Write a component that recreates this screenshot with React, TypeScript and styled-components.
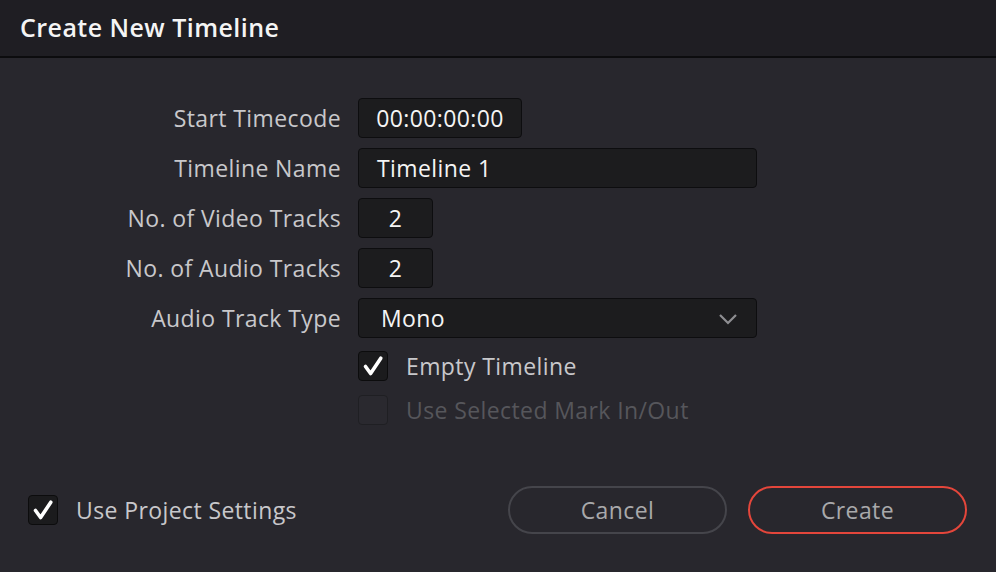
import React from "react";
import styled, { createGlobalStyle } from "styled-components";

const Global = createGlobalStyle`
  html, body { margin: 0; padding: 0; background: #28272d; }
  body { font-family: "Open Sans", "Noto Sans", sans-serif; }
  * { box-sizing: border-box; }
`;

const Dialog = styled.div`
  width: 996px;
  height: 572px;
  display: flex;
  flex-direction: column;
  background: #28272d;
  overflow: hidden;
`;

const Header = styled.div`
  height: 58px;
  flex: none;
  display: flex;
  align-items: center;
  padding: 0 0 3px 20px;
  background: #1f1e23;
  border-bottom: 2px solid #0c0c0e;
  color: #f4f4f4;
  font-size: 25px;
  font-weight: 600;
  letter-spacing: 0.45px;
`;

const Form = styled.div`
  display: grid;
  grid-template-columns: 341px auto;
  grid-auto-rows: 40px;
  column-gap: 17px;
  row-gap: 10px;
  padding-top: 40px;
`;

const Label = styled.div`
  display: flex;
  align-items: center;
  justify-content: flex-end;
  color: #c8c8cb;
  font-size: 23px;
  letter-spacing: 0.4px;
  padding-bottom: 1px;
`;

const Field = styled.div<{ $w: number; $align?: "center" | "left"; $pad?: number }>`
  width: ${(p) => p.$w}px;
  height: 40px;
  display: flex;
  align-items: center;
  justify-content: ${(p) => (p.$align === "center" ? "center" : "space-between")};
  padding: 0 ${(p) => p.$pad ?? 0}px 1px ${(p) => p.$pad ?? 0}px;
  background: #1c1c1e;
  border: 1px solid #0d0d0f;
  border-radius: 4px;
  color: #f4f4f4;
  font-size: 23px;
  letter-spacing: 0.4px;
`;

const Chevron = styled.svg`
  width: 20px;
  height: 12px;
  margin-right: -4px;
  margin-top: 2px;
`;

const CheckList = styled.div`
  display: flex;
  flex-direction: column;
  gap: 14px;
  padding: 13px 0 0 358px;
`;

const CheckRow = styled.div<{ $disabled?: boolean }>`
  display: flex;
  align-items: center;
  gap: 18px;
  height: 30px;
  line-height: 30px;
  font-size: 23px;
  letter-spacing: 0.4px;
  color: ${(p) => (p.$disabled ? "#56565b" : "#c8c8cb")};
`;

const Box = styled.div<{ $disabled?: boolean }>`
  width: 30px;
  height: 30px;
  flex: none;
  display: flex;
  align-items: center;
  justify-content: center;
  border-radius: 4px;
  background: ${(p) => (p.$disabled ? "#2a292f" : "#1b1b1d")};
  border: 1px solid ${(p) => (p.$disabled ? "#1f1f23" : "#0c0c0d")};
`;

const Footer = styled.div`
  margin-top: auto;
  display: flex;
  align-items: center;
  padding: 0 29px 38px 28px;
`;

const Spacer = styled.div`
  flex: 1;
`;

const Button = styled.button<{ $primary?: boolean }>`
  width: 219px;
  height: 48px;
  border-radius: 24px;
  background: transparent;
  border: 2px solid ${(p) => (p.$primary ? "#e4463b" : "#45454b")};
  color: #a9a9ab;
  font-family: "Open Sans", "Noto Sans", sans-serif;
  font-size: 23px;
  letter-spacing: 0.4px;
  padding: 0 0 1px;
  & + & {
    margin-left: 21px;
  }
`;

const Check = () => (
  <svg width="22" height="22" viewBox="0 0 22 22">
    <path
      d="M3.5 11.5 L8.6 18.5 L18.8 3.2"
      fill="none"
      stroke="#ffffff"
      strokeWidth="3.6"
      strokeLinecap="round"
      strokeLinejoin="round"
    />
  </svg>
);

function CheckBox({ checked, disabled }: { checked?: boolean; disabled?: boolean }) {
  return <Box $disabled={disabled}>{checked && <Check />}</Box>;
}

export default function App() {
  return (
    <>
      <Global />
      <Dialog>
        <Header>Create New Timeline</Header>
        <Form>
          <Label>Start Timecode</Label>
          <Field $w={164} $align="center">00:00:00:00</Field>
          <Label>Timeline Name</Label>
          <Field $w={399} $pad={18}>Timeline 1</Field>
          <Label>No. of Video Tracks</Label>
          <Field $w={75} $align="center">2</Field>
          <Label>No. of Audio Tracks</Label>
          <Field $w={75} $align="center">2</Field>
          <Label>Audio Track Type</Label>
          <Field $w={399} $pad={22}>
            Mono
            <Chevron viewBox="0 0 20 12">
              <path d="M2 2 L10 10 L18 2" fill="none" stroke="#8e8e92" strokeWidth="2.2" />
            </Chevron>
          </Field>
        </Form>
        <CheckList>
          <CheckRow>
            <CheckBox checked />
            Empty Timeline
          </CheckRow>
          <CheckRow $disabled>
            <CheckBox disabled />
            Use Selected Mark In/Out
          </CheckRow>
        </CheckList>
        <Footer>
          <CheckRow>
            <CheckBox checked />
            Use Project Settings
          </CheckRow>
          <Spacer />
          <Button>Cancel</Button>
          <Button $primary>Create</Button>
        </Footer>
      </Dialog>
    </>
  );
}
